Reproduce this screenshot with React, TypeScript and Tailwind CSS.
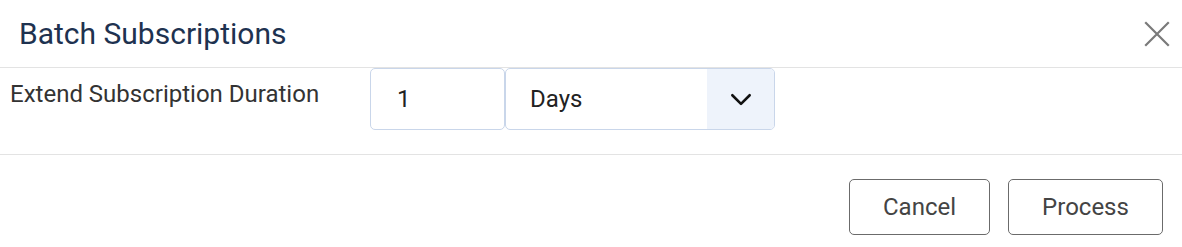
import React, { useState } from "react";

const ChevronDown = () => (
  <svg width="26" height="26" viewBox="0 0 24 24" fill="none" stroke="#111" strokeWidth="2.4" strokeLinecap="round" strokeLinejoin="round">
    <path d="M4 8.5l8 8 8-8" />
  </svg>
);

const CloseIcon = () => (
  <svg width="26" height="26" viewBox="0 0 26 26" fill="none" stroke="#7a7a7a" strokeWidth="2.2" strokeLinecap="square">
    <path d="M2 2l22 22M24 2L2 24" />
  </svg>
);

export default function App() {
  const [amount, setAmount] = useState("1");
  const [unit, setUnit] = useState("Days");

  return (
    <div className="w-[1182px] h-[247px] bg-white [font-family:Roboto,'Liberation_Sans',sans-serif]">
      {/* header */}
      <div className="flex items-center justify-between h-[68px] pl-[19px] pr-[12px] border-b border-[#e3e3e3]">
        <h2 className="text-[30px] leading-[36px] text-[#1e3250] font-normal">Batch Subscriptions</h2>
        <button className="p-0">
          <CloseIcon />
        </button>
      </div>

      {/* body */}
      <div className="flex h-[87px] border-b border-[#e3e3e3]">
        <div className="w-[370px] pl-[10px] pt-[10px] text-[24px] leading-[32px] text-[#333]">
          Extend Subscription Duration
        </div>
        <div className="flex items-start">
          <input
            value={amount}
            onChange={(e) => setAmount(e.target.value)}
            className="w-[135px] h-[62px] px-[26px] text-[24px] text-[#222] border border-[#c9d6ea] rounded-[5px] outline-none"
          />
          <div className="flex w-[270px] h-[62px] border border-[#c9d6ea] rounded-[5px] overflow-hidden">
            <div className="flex-1 flex items-center pl-[24px] text-[24px] text-[#222]">{unit}</div>
            <button
              className="w-[67px] flex items-center justify-center bg-[#eef3fb]"
              onClick={() => setUnit(unit === "Days" ? "Months" : "Days")}>
              <ChevronDown />
            </button>
          </div>
        </div>
      </div>

      {/* footer */}
      <div className="flex justify-end gap-[18px] pt-[24px] pr-[19px]">
        <button className="w-[141px] h-[56px] border border-[#6b6b6b] rounded-[5px] text-[24px] text-[#444]">
          Cancel
        </button>
        <button className="w-[155px] h-[56px] border border-[#6b6b6b] rounded-[5px] text-[24px] text-[#444]">
          Process
        </button>
      </div>
    </div>
  );
}
